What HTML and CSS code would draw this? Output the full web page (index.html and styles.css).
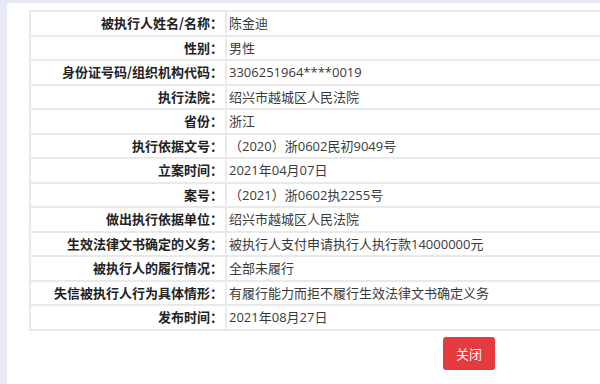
FILE: index.html
```html
<!DOCTYPE html>
<html lang="zh-CN">
<head>
<meta charset="utf-8">
<title>失信被执行人详情</title>
<link rel="stylesheet" href="styles.css">
</head>
<body>
<div class="panel">
  <div class="sheet">
    <table class="info">
      <tr><th>被执行人姓名/名称：</th><td>陈金迪</td></tr>
      <tr><th>性别：</th><td>男性</td></tr>
      <tr><th>身份证号码/组织机构代码：</th><td>3306251964****0019</td></tr>
      <tr><th>执行法院：</th><td>绍兴市越城区人民法院</td></tr>
      <tr><th>省份：</th><td>浙江</td></tr>
      <tr><th>执行依据文号：</th><td>（2020）浙0602民初9049号</td></tr>
      <tr><th>立案时间：</th><td>2021年04月07日</td></tr>
      <tr><th>案号：</th><td>（2021）浙0602执2255号</td></tr>
      <tr><th>做出执行依据单位：</th><td>绍兴市越城区人民法院</td></tr>
      <tr><th>生效法律文书确定的义务：</th><td>被执行人支付申请执行人执行款14000000元</td></tr>
      <tr><th>被执行人的履行情况：</th><td>全部未履行</td></tr>
      <tr><th>失信被执行人行为具体情形：</th><td>有履行能力而拒不履行生效法律文书确定义务</td></tr>
      <tr><th>发布时间：</th><td>2021年08月27日</td></tr>
    </table>
    <div class="actions">
      <button class="btn-close" type="button">关闭</button>
    </div>
  </div>
</div>
</body>
</html>
```

FILE: styles.css
```css
html, body {
  margin: 0;
  padding: 0;
  overflow: hidden;
  background: #e8e9f7;
  font-family: "Noto Sans CJK SC", "Noto Sans", "Liberation Sans", sans-serif;
  font-size: 13px;
  color: #333;
}

.panel {
  margin: 3px 0 0 7px;
  height: 400px;
  background: #fff;
  padding: 7px 0 0 22px;
  box-sizing: border-box;
  overflow: hidden;
}

.sheet {
  width: 880px;
}

.info {
  width: 880px;
  border-collapse: collapse;
  border: 2px solid #e9e9e9;
}

.info th,
.info td {
  border: 2px solid #e9e9e9;
  height: 22.5px;
  padding: 0;
  line-height: 16px;
  font-size: 13px;
  white-space: nowrap;
}

.info th {
  width: 192px;
  text-align: right;
  font-weight: bold;
  color: #222;
  padding-right: 2px;
}

.info td {
  text-align: left;
  color: #3a3a3a;
  padding-left: 2px;
  font-family: "Open Sans", "Noto Sans CJK SC", sans-serif;
}

.actions {
  display: flex;
  justify-content: center;
  padding-top: 6px;
}

.btn-close {
  width: 52px;
  height: 33px;
  border: none;
  border-radius: 3px;
  background: #e53a3e;
  color: #fff;
  font-family: inherit;
  font-size: 13px;
  padding: 0;
}
```
